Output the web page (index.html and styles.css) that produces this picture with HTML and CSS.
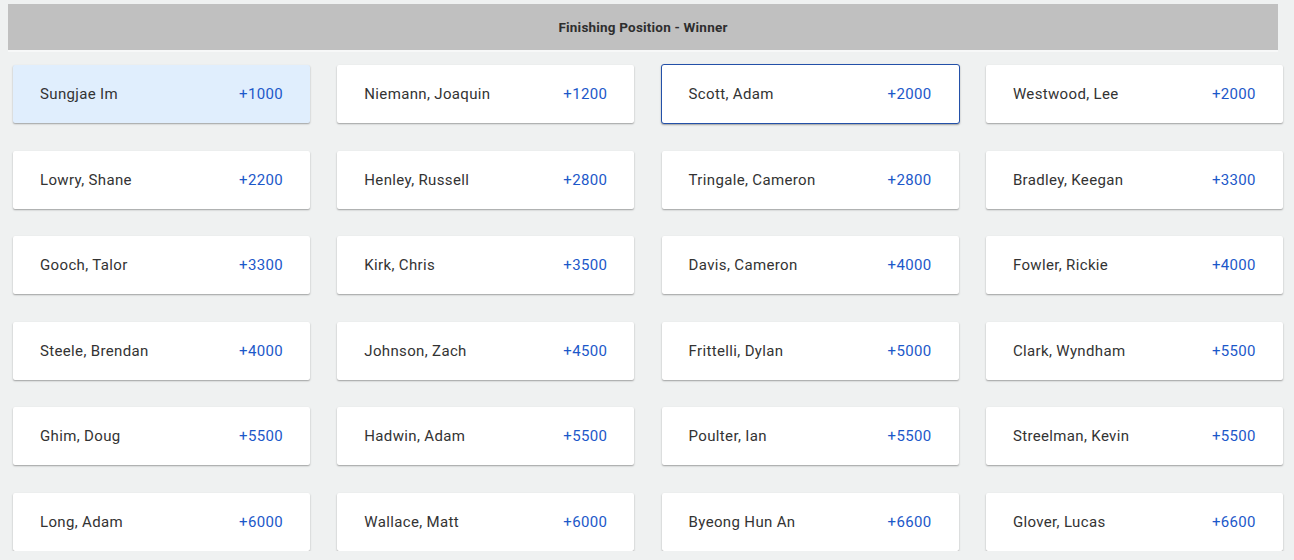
FILE: index.html
```html
<!DOCTYPE html>
<html>
<head>
<meta charset="utf-8">
<link rel="stylesheet" href="styles.css">
</head>
<body>
<div class="page">
  <div class="header">Finishing Position - Winner</div>
  <div class="grid">
    <div class="card selected"><span class="name">Sungjae Im</span><span class="odds">+1000</span></div>
    <div class="card"><span class="name">Niemann, Joaquin</span><span class="odds">+1200</span></div>
    <div class="card focused"><span class="name">Scott, Adam</span><span class="odds">+2000</span></div>
    <div class="card"><span class="name">Westwood, Lee</span><span class="odds">+2000</span></div>
    <div class="card"><span class="name">Lowry, Shane</span><span class="odds">+2200</span></div>
    <div class="card"><span class="name">Henley, Russell</span><span class="odds">+2800</span></div>
    <div class="card"><span class="name">Tringale, Cameron</span><span class="odds">+2800</span></div>
    <div class="card"><span class="name">Bradley, Keegan</span><span class="odds">+3300</span></div>
    <div class="card"><span class="name">Gooch, Talor</span><span class="odds">+3300</span></div>
    <div class="card"><span class="name">Kirk, Chris</span><span class="odds">+3500</span></div>
    <div class="card"><span class="name">Davis, Cameron</span><span class="odds">+4000</span></div>
    <div class="card"><span class="name">Fowler, Rickie</span><span class="odds">+4000</span></div>
    <div class="card"><span class="name">Steele, Brendan</span><span class="odds">+4000</span></div>
    <div class="card"><span class="name">Johnson, Zach</span><span class="odds">+4500</span></div>
    <div class="card"><span class="name">Frittelli, Dylan</span><span class="odds">+5000</span></div>
    <div class="card"><span class="name">Clark, Wyndham</span><span class="odds">+5500</span></div>
    <div class="card"><span class="name">Ghim, Doug</span><span class="odds">+5500</span></div>
    <div class="card"><span class="name">Hadwin, Adam</span><span class="odds">+5500</span></div>
    <div class="card"><span class="name">Poulter, Ian</span><span class="odds">+5500</span></div>
    <div class="card"><span class="name">Streelman, Kevin</span><span class="odds">+5500</span></div>
    <div class="card"><span class="name">Long, Adam</span><span class="odds">+6000</span></div>
    <div class="card"><span class="name">Wallace, Matt</span><span class="odds">+6000</span></div>
    <div class="card"><span class="name">Byeong Hun An</span><span class="odds">+6600</span></div>
    <div class="card"><span class="name">Glover, Lucas</span><span class="odds">+6600</span></div>
  </div>
</div>
</body>
</html>
```
FILE: styles.css
```css
html, body {
  margin: 0;
  padding: 0;
  background: #eff1f1;
  overflow: hidden;
}
.page {
  padding: 4px 16px 0 8px;
  font-family: Roboto, "Noto Sans", sans-serif;
}
.header {
  height: 48px;
  background: #c0c0c0;
  border-bottom: 2px solid #f7f8f8;
  display: flex;
  align-items: center;
  justify-content: center;
  box-sizing: border-box;
  font-size: 13.5px;
  letter-spacing: 0.2px;
  font-weight: 700;
  color: #2e2e2e;
}
.grid {
  display: grid;
  grid-template-columns: repeat(4, 297px);
  column-gap: 27.3px;
  row-gap: 27.5px;
  margin: 13px 0 0 5px;
}
.card {
  height: 58px;
  box-sizing: border-box;
  background: #ffffff;
  display: flex;
  align-items: center;
  justify-content: space-between;
  padding: 0 27px;
  border-radius: 2px;
  box-shadow: 0 1px 2px rgba(0, 0, 0, 0.28), 0 1px 1px rgba(0, 0, 0, 0.08);
  font-size: 15px;
  letter-spacing: 0.35px;
}
.card.selected {
  background: #e0eefd;
}
.card.focused {
  height: 60px;
  margin: -1px;
  border: 1px solid #2350a8;
  border-radius: 3px;
}
.name {
  color: #333333;
}
.odds {
  color: #1c58c9;
}
```
